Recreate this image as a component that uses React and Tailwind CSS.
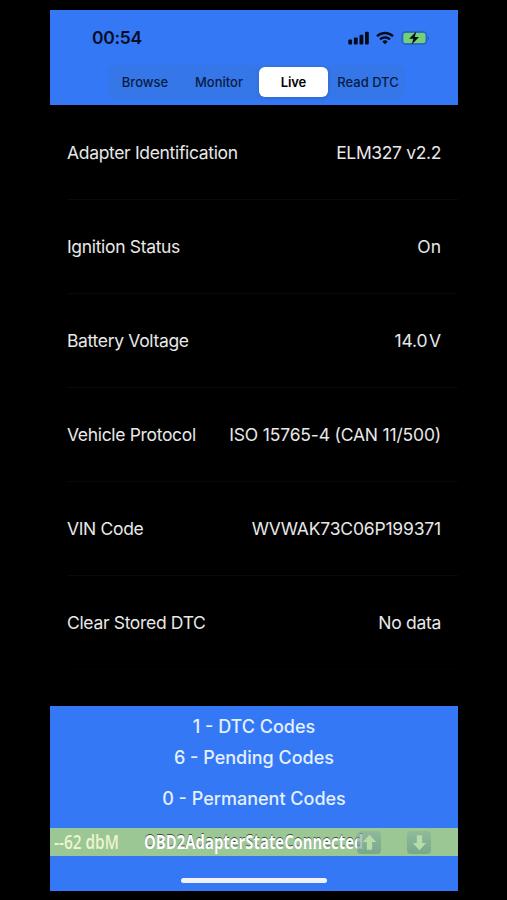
const TABS = [
  { label: 'Browse' },
  { label: 'Monitor' },
  { label: 'Live', active: true },
  { label: 'Read DTC' },
]

const ROWS = [
  { label: 'Adapter Identification', value: 'ELM327 v2.2', tracking: 'tracking-[-0.36px]' },
  { label: 'Ignition Status', value: 'On', tracking: 'tracking-[0px]' },
  { label: 'Battery Voltage', value: '14.0\u200AV', tracking: 'tracking-[-0.1px]' },
  { label: 'Vehicle Protocol', value: 'ISO 15765-4 (CAN 11/500)', tracking: 'tracking-[-0.18px]' },
  { label: 'VIN Code', value: 'WVWAK73C06P199371', tracking: 'tracking-[-0.18px]' },
  { label: 'Clear Stored DTC', value: 'No data', tracking: 'tracking-[-0.3px]' },
]

function StatusIcons() {
  return (
    <div className="flex items-center">
      <svg className="w-[22px] h-[14px]" viewBox="0 0 22 14" fill="#050b18">
        <rect x="0.3" y="8.6" width="3.8" height="4.8" rx="1" />
        <rect x="5.9" y="6.6" width="3.8" height="6.8" rx="1" />
        <rect x="11.5" y="3.7" width="3.8" height="9.7" rx="1" />
        <rect x="17" y="0.7" width="3.8" height="12.7" rx="1" />
      </svg>
      <svg className="ml-1.5 w-[18px] h-[14px]" viewBox="0 0 18 14" fill="none" stroke="#050b18" strokeWidth="2.3">
        <path d="M1 5.3a11.4 11.4 0 0 1 16 0" />
        <path d="M4 8.4a7.2 7.2 0 0 1 10 0" />
        <path d="M9 13.2L6.3 10.5a3.9 3.9 0 0 1 5.4 0z" fill="#050b18" stroke="none" />
      </svg>
      <svg className="ml-[7px] w-[29px] h-[14px]" viewBox="0 0 29 14">
        <rect x="1.1" y="0.8" width="24.6" height="12.4" rx="3.6" fill="none" stroke="#2860b4" strokeWidth="1.2" />
        <rect x="2.4" y="2" width="22" height="10" rx="2" fill="#75d072" />
        <path d="M26.8 5v4.2c1.8-.7 1.8-3.5 0-4.2z" fill="#2860b4" />
        <path d="M15.3.4L8.2 7.8h4.2l-1.7 5.8L18 6.1h-4.2z" fill="#050b18" />
      </svg>
    </div>
  )
}

function ArrowButton({ down }) {
  return (
    <button className="relative w-6 h-[23px] rounded-[4px] bg-linear-to-b from-[#8bb1a0]/60 to-[#5f9484]/60 flex items-center justify-center">
      <svg className={down ? 'w-[19px] h-[19px] rotate-180' : 'w-[19px] h-[19px]'} viewBox="0 0 20 20" fill="#b4dda9">
        <path d="M10 1.8L3 9.4h4.2v8.2h5.6V9.4H17z" />
      </svg>
    </button>
  )
}

export default function App() {
  return (
    <div className="w-[507px] h-[900px] bg-black pt-[10px] pl-[50px] overflow-hidden font-['Inter',sans-serif]">
      <div className="w-[408px] h-[881px] flex flex-col">
        {/* Status bar and tabs */}
        <header className="h-[95px] shrink-0 bg-[#3478f6]">
          <div className="h-[55px] flex items-center justify-between pl-[42px] pr-[28px]">
            <span className="pt-0.5 text-[17.5px] font-semibold text-[#050e24] tracking-[-0.3px]">00:54</span>
            <StatusIcons />
          </div>
          <div className="ml-[58px] w-[297px] h-[34px] rounded-lg bg-[#3577e8] flex items-center">
            {TABS.map((tab) => (
              <button
                key={tab.label}
                className={
                  tab.active
                    ? 'w-[69px] h-[30px] mx-[3px] pt-px rounded-[6px] bg-white shadow-[0_1px_4px_rgba(0,0,0,0.15)] text-[13px] font-semibold tracking-[-0.1px] text-black whitespace-nowrap'
                    : 'w-[74px] h-[30px] pt-px text-[13px] font-medium text-[#081c42] whitespace-nowrap'
                }
              >
                {tab.label}
              </button>
            ))}
          </div>
        </header>

        {/* Vehicle details */}
        <main className="h-[601px] shrink-0 pl-[17px] pt-px">
          {ROWS.map((row) => (
            <div
              key={row.label}
              className="h-[94px] border-b border-[#090909] last:border-[#030303] pt-0.5 pr-[17px] flex items-center justify-between text-[17.5px] text-[#e8e8e8] whitespace-nowrap"
            >
              <span className="tracking-[-0.33px]">{row.label}</span>
              <span className={row.tracking}>{row.value}</span>
            </div>
          ))}
        </main>

        {/* Code counters */}
        <footer className="h-[185px] shrink-0 bg-[#3478f6] flex flex-col">
          <div className="h-[122px] pt-[5px] text-center text-[18px] font-medium text-[#e3f0ff]">
            <p className="h-[31px] leading-[31px]">1 - DTC Codes</p>
            <p className="h-[31px] leading-[31px]">6 - Pending Codes</p>
            <p className="mt-[10px] h-[31px] leading-[31px]">0 - Permanent Codes</p>
          </div>
          <div className="h-7 bg-[#9bc795] flex items-center pl-1 font-['Open_Sans',sans-serif] whitespace-nowrap">
            <div className="w-[90px]">
              <span className="inline-block origin-left scale-x-[0.81] text-[19px] leading-7 font-semibold text-[#eef5cd]">--62 dbM</span>
            </div>
            <div className="w-[213px]">
              <span className="inline-block origin-left scale-x-[0.782] text-[19px] leading-7 font-bold text-white [text-shadow:0_-1px_0_#3f5140]">
                OBD2AdapterStateConnected
              </span>
            </div>
            <ArrowButton />
            <div className="w-[26px]" />
            <ArrowButton down />
          </div>
          <div className="mx-auto mt-[22px] w-[146px] h-[5px] rounded-full bg-[#f0f2f5]" />
        </footer>
      </div>
    </div>
  )
}
